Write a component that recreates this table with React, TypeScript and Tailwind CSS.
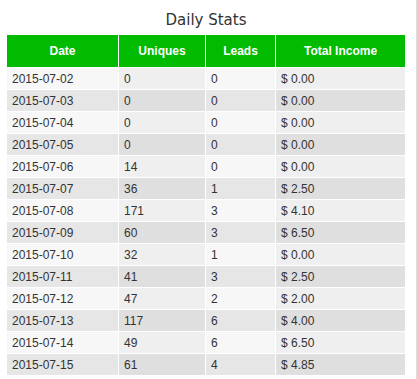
import React from "react";

const rows: [string, string, string, string][] = [
  ["2015-07-02", "0", "0", "$ 0.00"],
  ["2015-07-03", "0", "0", "$ 0.00"],
  ["2015-07-04", "0", "0", "$ 0.00"],
  ["2015-07-05", "0", "0", "$ 0.00"],
  ["2015-07-06", "14", "0", "$ 0.00"],
  ["2015-07-07", "36", "1", "$ 2.50"],
  ["2015-07-08", "171", "3", "$ 4.10"],
  ["2015-07-09", "60", "3", "$ 6.50"],
  ["2015-07-10", "32", "1", "$ 0.00"],
  ["2015-07-11", "41", "3", "$ 2.50"],
  ["2015-07-12", "47", "2", "$ 2.00"],
  ["2015-07-13", "117", "6", "$ 4.00"],
  ["2015-07-14", "49", "6", "$ 6.50"],
  ["2015-07-15", "61", "4", "$ 4.85"],
];

const headers = ["Date", "Uniques", "Leads", "Total Income"];

export default function App() {
  return (
    <div className="w-[417px] h-[379px] bg-white border-r border-[#dcdcdc] overflow-hidden">
      <div className="ml-[7px] w-[398px] pt-[10px]">
        <div
          className="h-[20px] leading-[20px] text-center text-[15px] text-[#333333]"
          style={{ fontFamily: '"DejaVu Sans", sans-serif' }}
        >
          Daily Stats
        </div>
        <div
          className="mt-[5px] grid grid-cols-[111px_86px_69px_129px] gap-px bg-white text-[12px]"
          style={{ fontFamily: '"Liberation Sans", Arial, sans-serif' }}
        >
          {headers.map((h) => (
            <div
              key={h}
              className="h-[32px] flex items-center justify-center bg-[#00bb00] text-white font-bold"
            >
              {h}
            </div>
          ))}
          {rows.map((r, i) =>
            r.map((c, j) => {
              const odd = i % 2 === 0;
              const light = j % 2 === 0;
              const bg = odd
                ? light
                  ? "bg-[#f7f7f7]"
                  : "bg-[#efefef]"
                : light
                ? "bg-[#e6e6e6]"
                : "bg-[#dfdfdf]";
              return (
                <div
                  key={`${i}-${j}`}
                  className={`h-[21px] flex items-center pl-[5px] text-[#333333] ${bg}`}
                >
                  {c}
                </div>
              );
            })
          )}
        </div>
      </div>
    </div>
  );
}
